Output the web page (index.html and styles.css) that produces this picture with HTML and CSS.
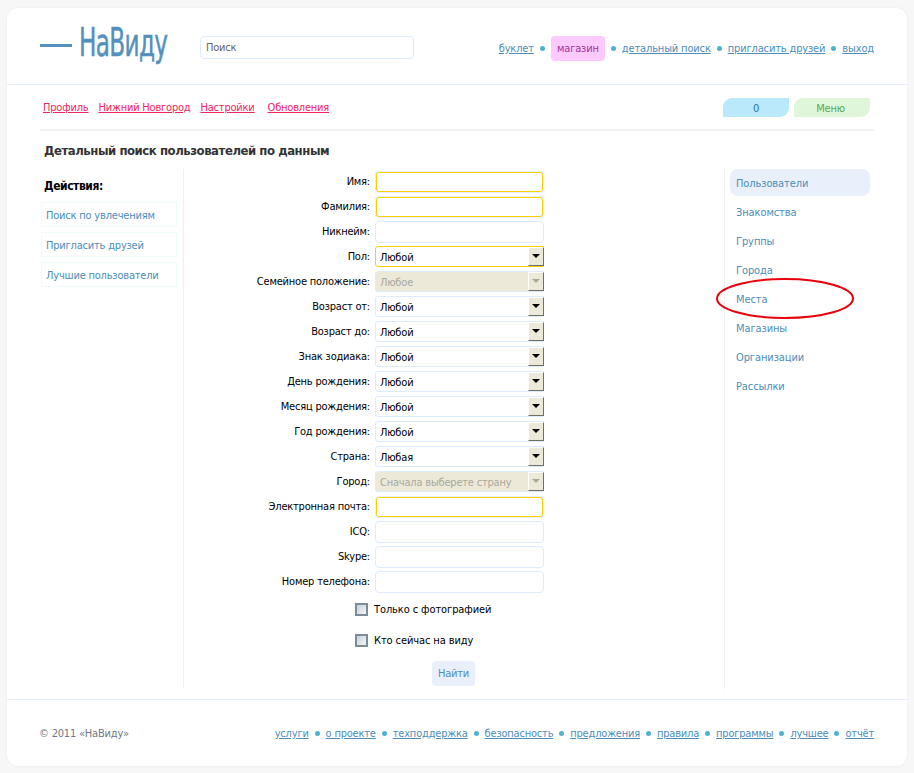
FILE: index.html
```html
<!DOCTYPE html>
<html>
	<head>
		<title>НаВиду</title>
		<link rel="stylesheet" href="styles.css">
	</head>
	<body>
		<div class="page">
			<div class="header">
				<div class="logo"><span class="logoDash"></span><span class="logoText">НаВиду</span></div>
				<input class="search" type="text" value="Поиск">
				<div class="links topLinks">
					<a href="#">буклет</a><i></i>
					<span class="shop">магазин</span><i></i>
					<a href="#">детальный поиск</a><i></i>
					<a href="#">пригласить друзей</a><i></i>
					<a href="#">выход</a>
				</div>
			</div>
			<div class="subbar">
				<div class="subLinks">
					<a href="#">Профиль</a>
					<a href="#">Нижний Новгород</a>
					<a href="#">Настройки</a>
					<a class="updates" href="#">Обновления</a>
				</div>
				<div class="tabs">
					<span class="tab tabCount">0</span>
					<span class="tab tabMenu">Меню</span>
				</div>
			</div>
			<h1 class="title">Детальный поиск пользователей по данным</h1>
			<div class="columns">
				<div class="actions">
					<div class="actionsTitle">Действия:</div>
					<a class="action" href="#">Поиск по увлечениям</a>
					<a class="action" href="#">Пригласить друзей</a>
					<a class="action" href="#">Лучшие пользователи</a>
				</div>
				<div class="formCol">
					<form class="searchForm">
						<label>Имя:</label>
						<input class="field focus" type="text">
						<label>Фамилия:</label>
						<input class="field focus" type="text">
						<label>Никнейм:</label>
						<input class="field" type="text">
						<label>Пол:</label>
						<div class="sel focus"><select><option>Любой</option></select><span class="arrow"></span></div>
						<label>Семейное положение:</label>
						<div class="sel off"><select disabled><option>Любое</option></select><span class="arrow"></span></div>
						<label>Возраст от:</label>
						<div class="sel"><select><option>Любой</option></select><span class="arrow"></span></div>
						<label>Возраст до:</label>
						<div class="sel"><select><option>Любой</option></select><span class="arrow"></span></div>
						<label>Знак зодиака:</label>
						<div class="sel"><select><option>Любой</option></select><span class="arrow"></span></div>
						<label>День рождения:</label>
						<div class="sel"><select><option>Любой</option></select><span class="arrow"></span></div>
						<label>Месяц рождения:</label>
						<div class="sel"><select><option>Любой</option></select><span class="arrow"></span></div>
						<label>Год рождения:</label>
						<div class="sel"><select><option>Любой</option></select><span class="arrow"></span></div>
						<label>Страна:</label>
						<div class="sel"><select><option>Любая</option></select><span class="arrow"></span></div>
						<label>Город:</label>
						<div class="sel off"><select disabled><option>Сначала выберете страну</option></select><span class="arrow"></span></div>
						<label>Электронная почта:</label>
						<input class="field focus" type="text">
						<label>ICQ:</label>
						<input class="field" type="text">
						<label>Skype:</label>
						<input class="field" type="text">
						<label>Номер телефона:</label>
						<input class="field" type="text">
					</form>
					<div class="check first"><span class="box"></span>Только с фотографией</div>
					<div class="check"><span class="box"></span>Кто сейчас на виду</div>
					<div class="submitRow"><button type="button">Найти</button></div>
				</div>
				<div class="sections">
					<a class="active" href="#">Пользователи</a>
					<a href="#">Знакомства</a>
					<a href="#">Группы</a>
					<a href="#">Города</a>
					<a href="#">Места</a>
					<a href="#">Магазины</a>
					<a href="#">Организации</a>
					<a href="#">Рассылки</a>
				</div>
			</div>
			<div class="footer">
				<span class="copy">© 2011 «НаВиду»</span>
				<div class="links">
					<a href="#">услуги</a><i></i>
					<a href="#">о проекте</a><i></i>
					<a href="#">техподдержка</a><i></i>
					<a href="#">безопасность</a><i></i>
					<a href="#">предложения</a><i></i>
					<a href="#">правила</a><i></i>
					<a href="#">программы</a><i></i>
					<a href="#">лучшее</a><i></i>
					<a href="#">отчёт</a>
				</div>
			</div>
			<svg class="mark" width="140" height="44" viewBox="0 0 140 44">
				<ellipse cx="69" cy="21.5" rx="68" ry="19.5" fill="none" stroke="#e8000c" stroke-width="2"></ellipse>
			</svg>
		</div>
	</body>
</html>
```

FILE: styles.css
```css
html,
body {
	margin: 0;
	height: 773px;
	overflow: hidden;
}

body {
	background-color: #f7f7f7;
	color: #000;
	font-family: "DejaVu Sans Condensed", "Liberation Sans", sans-serif;
	font-size: 11px;
	letter-spacing: -0.2px;
	padding: 8px 7px 0;
	box-sizing: border-box;
}

a {
	color: #4d8db8;
}

.page {
	position: relative;
	width: 900px;
	height: 758px;
	box-sizing: border-box;
	background-color: #fff;
	border-radius: 11px;
	box-shadow: 0 0 2px #e4e4e4;
}

/* header */
.header {
	height: 77px;
	box-sizing: border-box;
	padding: 28px 33px 0 33px;
	display: flex;
	align-items: flex-start;
	border-bottom: 1px solid #e8f0fb;
}

.logo {
	width: 160px;
	height: 34px;
	display: flex;
	align-items: center;
	gap: 7px;
	color: #5590bd;
}

.logoDash {
	flex: none;
	width: 32px;
	height: 3px;
	background-color: #5590bd;
	margin-top: -15px;
}

.logoText {
	font-family: "DejaVu Sans Condensed", sans-serif;
	font-size: 39px;
	line-height: 34px;
	letter-spacing: -1px;
	margin-top: -20px;
	transform: scaleX(0.66);
	transform-origin: left center;
	-webkit-text-stroke: 0.5px #5590bd;
}

.search {
	width: 214px;
	height: 23px;
	box-sizing: border-box;
	border: 1px solid #dcecfd;
	border-radius: 4px;
	padding: 0 5px;
	font: inherit;
	letter-spacing: inherit;
	color: #666;
}

.links {
	display: flex;
	align-items: center;
}

.links i {
	width: 5px;
	height: 5px;
	border-radius: 50%;
	background-color: #4fb2cf;
	margin: 0 6px;
}

.topLinks {
	margin-left: auto;
	height: 25px;
	letter-spacing: -0.15px;
}

.shop {
	background-color: #fdcaff;
	color: #a2329c;
	border-radius: 4px;
	padding: 6px;
	line-height: 13px;
}

/* second row */
.subbar {
	margin: 0 33px;
	height: 46px;
	box-sizing: border-box;
	border-bottom: 2px solid #f0f2f5;
	display: flex;
	justify-content: space-between;
	padding-top: 13px;
}

.subLinks {
	padding: 3px 0 0 3px;
	display: flex;
	gap: 10px;
}

.subLinks a {
	color: #f0255f;
}

.subLinks .updates {
	margin-left: 3px;
}

.tabs {
	display: flex;
	gap: 5px;
	margin-right: 4px;
}

.tab {
	height: 19px;
	line-height: 21px;
	text-align: center;
	border-radius: 9px 0 9px 0;
}

.tabCount {
	width: 66px;
	background-color: #b9e9fb;
	color: #2c72a8;
}

.tabMenu {
	width: 76px;
	padding-right: 3px;
	box-sizing: border-box;
	background-color: #dff6da;
	color: #5ba852;
}

.title {
	margin: 13px 0 0 37px;
	height: 14px;
	font-size: 13px;
	letter-spacing: -0.45px;
	line-height: 14px;
	color: #333;
}

/* columns */
.columns {
	display: flex;
	margin: 11px 33px 0;
	height: 520px;
}

.actions {
	width: 142px;
	border-right: 1px solid #eef0f3;
	padding-left: 1px;
}

.actionsTitle {
	font-weight: bold;
	font-size: 12px;
	letter-spacing: -0.45px;
	margin: 10px 0 9px 3px;
	line-height: 14px;
}

.action {
	display: block;
	width: 136px;
	height: 25px;
	box-sizing: border-box;
	border: 1px solid #eefcfc;
	margin-bottom: 5px;
	padding-left: 4px;
	line-height: 26px;
	text-decoration: none;
}

.formCol {
	width: 540px;
	border-right: 1px solid #eef0f3;
}

.searchForm {
	display: grid;
	grid-template-columns: 186px 169px;
	column-gap: 5px;
	grid-auto-rows: 25px;
	align-items: center;
}

.searchForm label {
	text-align: right;
}

.field {
	width: 169px;
	height: 22px;
	box-sizing: border-box;
	border: 1px solid #dcecfd;
	border-radius: 4px;
	padding: 0 4px;
}

.field.focus {
	border: 1px solid #fcd000;
	box-shadow: 0 0 0 1px #e4f0fd;
	width: 167px;
	height: 20px;
	margin-left: 1px;
	border-radius: 3px;
}

.sel {
	position: relative;
	width: 169px;
	height: 21px;
	box-sizing: border-box;
	border: 1px solid #dcecfd;
	border-radius: 3px 0 0 3px;
	background-color: #fff;
}

.sel.focus {
	border-color: #fcd000;
}

.sel select {
	appearance: none;
	display: block;
	width: 100%;
	height: 19px;
	border: none;
	background: none;
	padding: 1px 4px 0;
	margin: 0;
	font: inherit;
	letter-spacing: inherit;
	color: #000;
}

.sel.off {
	background-color: #ece9d8;
}

.sel.off select {
	color: #a9a89e;
	opacity: 1;
}

.arrow {
	position: absolute;
	top: 0;
	right: -1px;
	width: 16px;
	height: 19px;
	box-sizing: border-box;
	background-color: #ece9d8;
	border-style: solid;
	border-width: 1px;
	border-color: #fff #716f64 #716f64 #fff;
	pointer-events: none;
}

.arrow::after {
	content: "";
	position: absolute;
	left: 3px;
	top: 6px;
	border-style: solid;
	border-width: 4px 4px 0;
	border-color: #000 transparent transparent;
}

.off .arrow::after {
	border-top-color: #a9a89e;
}

.check {
	display: flex;
	align-items: center;
	margin: 17px 0 0 171px;
	height: 14px;
	letter-spacing: -0.1px;
}

.check.first {
	margin-top: 8px;
}

.box {
	width: 9px;
	height: 9px;
	border: 2px solid #7b8c98;
	background: linear-gradient(135deg, #c8d2da, #f4f6f8);
	margin-right: 6px;
}

.submitRow {
	padding: 14px 0 0 248px;
}

.submitRow button {
	width: 43px;
	height: 25px;
	border: none;
	border-radius: 4px;
	background-color: #e9f0fb;
	color: #4d8db8;
	font: inherit;
	letter-spacing: inherit;
	padding: 0;
}

.sections {
	padding-left: 5px;
}

.sections a {
	display: block;
	width: 140px;
	height: 27px;
	box-sizing: border-box;
	margin-bottom: 2px;
	padding-left: 6px;
	line-height: 30px;
	border-radius: 8px;
	letter-spacing: -0.1px;
	text-decoration: none;
}

.sections .active {
	background-color: #e9f0fb;
}

/* footer */
.footer {
	border-top: 1px solid #e8f0fb;
	margin-top: 10px;
	padding: 26px 33px 0 32px;
	display: flex;
	justify-content: space-between;
	align-items: center;
}

.copy {
	color: #70778a;
}

.footer .links {
	height: 15px;
}

.mark {
	position: absolute;
	left: 709px;
	top: 269px;
}
```
